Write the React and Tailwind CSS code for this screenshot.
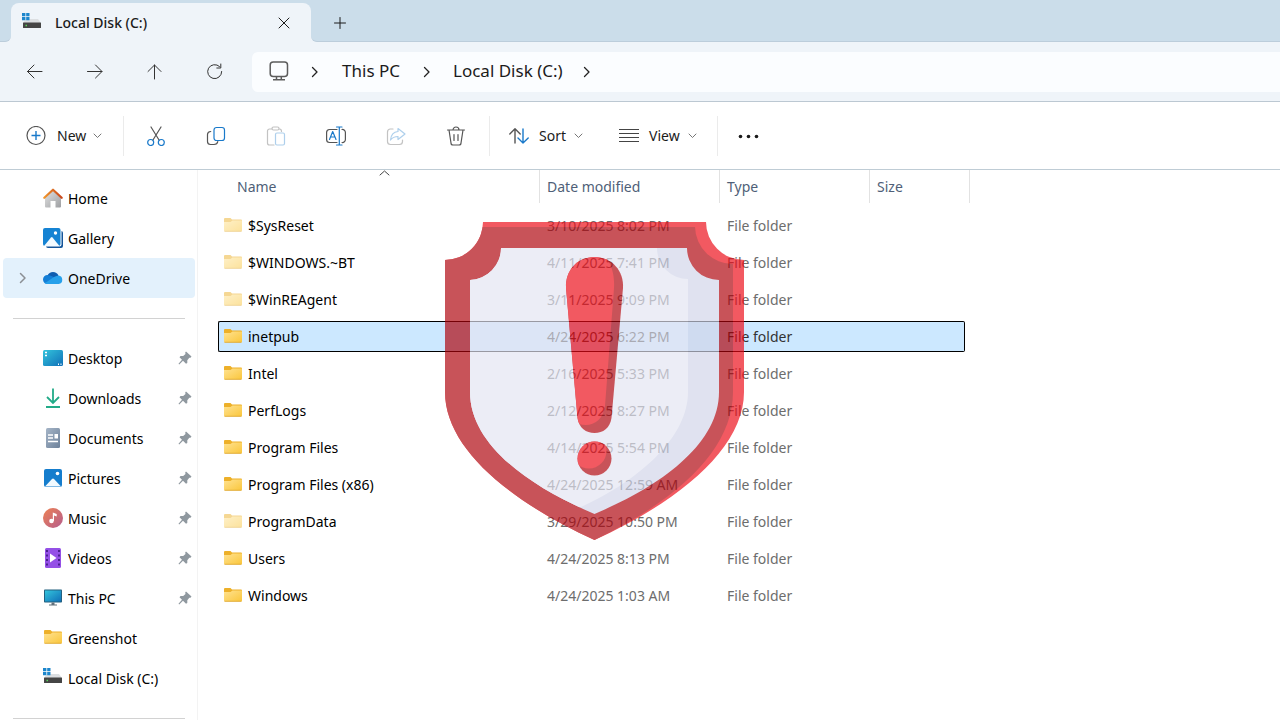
import React from 'react';

const places = [
    { name: 'Home', icon: HomeIcon },
    { name: 'Gallery', icon: GalleryIcon },
    { name: 'OneDrive', icon: CloudIcon, active: true },
];

const pinned = [
    { name: 'Desktop', icon: DesktopIcon, pin: true },
    { name: 'Downloads', icon: DownloadsIcon, pin: true },
    { name: 'Documents', icon: DocumentsIcon, pin: true },
    { name: 'Pictures', icon: PicturesIcon, pin: true },
    { name: 'Music', icon: MusicIcon, pin: true },
    { name: 'Videos', icon: VideosIcon, pin: true },
    { name: 'This PC', icon: MonitorIcon, pin: true },
    { name: 'Greenshot', icon: FolderIcon },
    { name: 'Local Disk (C:)', icon: DiskIcon },
];

const files = [
    { name: '$SysReset', date: '3/10/2025 8:02 PM', hidden: true },
    { name: '$WINDOWS.~BT', date: '4/11/2025 7:41 PM', hidden: true },
    { name: '$WinREAgent', date: '3/11/2025 9:09 PM', hidden: true },
    { name: 'inetpub', date: '4/24/2025 6:22 PM', selected: true },
    { name: 'Intel', date: '2/16/2025 5:33 PM' },
    { name: 'PerfLogs', date: '2/12/2025 8:27 PM' },
    { name: 'Program Files', date: '4/14/2025 5:54 PM' },
    { name: 'Program Files (x86)', date: '4/24/2025 12:59 AM' },
    { name: 'ProgramData', date: '3/29/2025 10:50 PM', hidden: true },
    { name: 'Users', date: '4/24/2025 8:13 PM' },
    { name: 'Windows', date: '4/24/2025 1:03 AM' },
];

export default function App() {
    return (
        <div className="min-h-screen flex flex-col bg-white text-[#1b1b1b] text-sm font-['Noto_Sans','Open_Sans',sans-serif]">
            <TabStrip />
            <AddressRow />
            <Toolbar />
            <div className="flex flex-1">
                <Sidebar />
                <main className="relative flex-1 pl-5">
                    <FileTable />
                    <Shield />
                </main>
            </div>
        </div>
    );
}

function TabStrip() {
    return (
        <header className="flex h-[42px] bg-[#eff4f9]">
            <div className="w-[11px] bg-[#cbddea] rounded-br-md border-b border-[#bccddb]" />
            <div className="w-[300px] bg-[#cbddea] pt-[3px]">
                <div className="flex items-center h-full bg-[#eff4f9] rounded-t-lg pl-[11px] pr-[15px]">
                    <DiskIcon />
                    <span className="ml-[13px] flex-1 font-medium">Local Disk (C:)</span>
                    <button aria-label="Close tab" className="w-6 h-6 grid place-items-center">
                        <Line d="M1 1 11 11M11 1 1 11" box="0 0 12 12" className="w-3 h-3" />
                    </button>
                </div>
            </div>
            <div className="flex-1 flex items-center bg-[#cbddea] rounded-bl-md border-b border-[#bccddb] pl-[17px]">
                <button aria-label="New tab" className="w-6 h-6 mt-1 grid place-items-center">
                    <Line d="M6 0.5V11.5M0.5 6H11.5" box="0 0 12 12" className="w-3 h-3" />
                </button>
            </div>
        </header>
    );
}

function AddressRow() {
    return (
        <div className="flex items-center h-[60px] bg-[#eff4f9] border-b border-[#bcc8d2]">
            <div className="flex gap-5 pl-[15px]">
                <NavButton label="Back" d="M17 9.5H2.5M9 3 2.5 9.5 9 16" />
                <NavButton label="Forward" d="M2.5 9.5H17M10.500 3 17 9.500 10.500 16" />
                <NavButton label="Up" d="M9.500 17V3M3 9.500 9.500 3 16 9.500" />
                <NavButton label="Refresh" d="M14.500 4.500A7 7 0 1 0 16.700 9.500M15.800 2V6H11.800" />
            </div>
            <nav className="flex-1 flex items-center h-10 ml-[17px] bg-[#fbfdff] rounded-l-md text-[17px]">
                <svg viewBox="0 0 20 20" className="w-5 h-5 ml-[17px] mb-0.5" fill="none" stroke="#5c5c5c" strokeWidth="1.500">
                    <rect x="1.200" y="1" width="17.300" height="14.500" rx="3" />
                    <path d="M7.500 15.500V18.500M12.300 15.500V18.500M4 18.700H16" />
                </svg>
                <Crumb />
                <button className="w-[60px] whitespace-nowrap">This PC</button>
                <Crumb />
                <button className="w-[108px] whitespace-nowrap">Local Disk (C:)</button>
                <Crumb />
            </nav>
        </div>
    );
}

function NavButton({ label, d }) {
    return (
        <button aria-label={label} className="w-10 h-10 grid place-items-center">
            <Line d={d} box="0 0 20 20" width={1} className="w-5 h-5 text-[#333]" />
        </button>
    );
}

function Crumb() {
    return (
        <span className="w-[52px] grid place-items-center">
            <Line d="M1.500 1.500 6 6 1.500 10.500" box="0 0 8 12" width={1.300} className="w-2 h-3 text-[#222]" />
        </span>
    );
}

function Line({ d, box, className, width = 1 }) {
    return (
        <svg viewBox={box} className={className} fill="none" stroke="currentColor" strokeWidth={width} strokeLinecap="round" strokeLinejoin="round">
            <path d={d} />
        </svg>
    );
}

function Chevron() {
    return <Line d="M1 1 4.500 4.500 8 1" box="0 0 9 6" width={0.9} className="w-[9px] h-[6px] text-[#666]" />;
}

function Toolbar() {
    return (
        <div className="flex items-center h-[68px] border-b border-[#bfccd5]">
            <button className="flex items-center w-[123px] pl-[26px]">
                <svg viewBox="0 0 20 20" className="w-5 h-5" fill="none" strokeWidth="1.200">
                    <circle cx="10" cy="9.500" r="9" stroke="#555" />
                    <path d="M10 5V14M5.500 9.500H14.500" stroke="#1979ca" strokeWidth="1.400" />
                </svg>
                <span className="w-[37px] pl-[11px]">New</span>
                <span className="ml-auto mr-[21px]"><Chevron /></span>
            </button>
            <Divider />
            <div className="flex items-center pl-0.5">
                <Tool label="Cut">
                    <path d="M5 1 13.200 14.200M15 1 6.800 14.200" stroke="#555" />
                    <circle cx="4.700" cy="16.500" r="3" stroke="#1979ca" />
                    <circle cx="15.300" cy="16.500" r="3" stroke="#1979ca" />
                </Tool>
                <Tool label="Copy">
                    <path d="M4.700 5.500C2.500 5.700 1.500 6.800 1.500 8.500V15.500A3 3 0 0 0 4.500 18.500H8C10.200 18.500 11.500 17.500 11.800 15.500" stroke="#555" />
                    <rect x="8" y="1.500" width="10.500" height="13" rx="2.500" stroke="#1979ca" />
                </Tool>
                <Tool label="Paste" faded>
                    <path d="M6 3H3.500A2 2 0 0 0 1.500 5V17A2 2 0 0 0 3.500 19H8M13.500 3C15 3 15.500 4 15.500 5.500" stroke="#555" />
                    <rect x="6" y="1" width="7" height="3" rx="1.500" stroke="#555" />
                    <rect x="9.500" y="7" width="9" height="12" rx="1.500" stroke="#1979ca" />
                </Tool>
                <Tool label="Rename">
                    <path d="M11 3.500H3.500A3 3 0 0 0 .6 6.500V13.500A3 3 0 0 0 3.500 16.500H11M16 3.500A3 3 0 0 1 19.400 6.500V13.500A3 3 0 0 1 16 16.500" stroke="#555" />
                    <path d="M10.500 1H16M10.500 19H16M13.300 1V19M3.500 13.500 6.700 5.500 10 13.500M4.700 11H8.800" stroke="#1979ca" />
                </Tool>
                <Tool label="Share" faded>
                    <path d="M7 3H4A3 3 0 0 0 1.500 6V15.500A3 3 0 0 0 4.500 18.500H13.500A3 3 0 0 0 16.500 15.500V14" stroke="#555" />
                    <path d="M12 2.500 19 8 12 13.500V10.500C8.500 10.500 6.500 11.500 4.500 14C5 9 7.500 5.800 12 5.500Z" stroke="#1979ca" />
                </Tool>
                <Tool label="Delete">
                    <path d="M1.500 4H18.500M3 4 5 17A2 2 0 0 0 7 19H13A2 2 0 0 0 15 17L17 4M7 4A3 3 0 0 1 13 4M8 8.500V14.500M12 8.500V14.500" stroke="#555" />
                </Tool>
            </div>
            <div className="w-[3px]" />
            <Divider />
            <button className="flex items-center pl-[19px]">
                <svg viewBox="0 0 20 20" className="w-5 h-5" fill="none" strokeWidth="1.400" strokeLinecap="round" strokeLinejoin="round">
                    <path d="M6 17V3M.800 8 6 2.800 11.200 8" stroke="#555" />
                    <path d="M14 3V17M9 12 14 17 19.200 12" stroke="#1979ca" />
                </svg>
                <span className="w-[45px] pl-2.5 text-left">Sort</span>
                <Chevron />
            </button>
            <button className="flex items-center pl-9">
                <svg viewBox="0 0 20 20" className="w-5 h-5" fill="none" stroke="#444" strokeWidth="1.200">
                    <path d="M0 3.500H20M0 7.500H20M0 11.500H20M0 15.500H20" />
                </svg>
                <span className="w-[49px] pl-2.5 text-left">View</span>
                <Chevron />
            </button>
            <div className="w-5" />
            <Divider />
            <button aria-label="See more" className="pl-5">
                <svg viewBox="0 0 22 20" className="w-[22px] h-5" fill="#1b1b1b">
                    <circle cx="2.500" cy="10.500" r="1.800" />
                    <circle cx="10.500" cy="10.500" r="1.800" />
                    <circle cx="18.500" cy="10.500" r="1.800" />
                </svg>
            </button>
        </div>
    );
}

function Divider() {
    return <div className="w-px h-10 bg-[#ebebeb]" />;
}

function Tool({ label, faded, children }) {
    return (
        <button aria-label={label} disabled={faded} className={`w-[60px] h-10 grid place-items-center ${faded ? 'opacity-35' : ''}`}>
            <svg viewBox="0 0 20 20" className="w-5 h-5" fill="none" strokeWidth="1.200" strokeLinecap="round" strokeLinejoin="round">
                {children}
            </svg>
        </button>
    );
}

function Sidebar() {
    return (
        <aside className="w-[198px] shrink-0 border-r border-[#f3f3f3] pt-2 pl-[3px] pr-0.5 text-black">
            {places.map((p) => <SideItem key={p.name} item={p} />)}
            <hr className="mt-5 mb-[19px] mx-2.5 border-[#d2d2d2]" />
            {pinned.map((p) => <SideItem key={p.name} item={p} />)}
            <hr className="mt-5 mx-2.5 border-[#d2d2d2]" />
        </aside>
    );
}

function SideItem({ item }) {
    const Icon = item.icon;
    return (
        <a href="#" className={`flex items-center h-10 rounded-sm ${item.active ? 'bg-[#e3f1fc]' : ''}`}>
            <span className="w-10 grid place-items-center">
                {item.active && <Line d="M1.500 1.500 6 6 1.500 10.500" box="0 0 8 12" width={1.500} className="w-2 h-3 text-[#8b8f94]" />}
            </span>
            <Icon />
            <span className="ml-[5px] pt-px flex-1">{item.name}</span>
            {item.pin && <PinIcon />}
        </a>
    );
}

function FileTable() {
    return (
        <table className="w-[752px] table-fixed text-left border-collapse">
            <thead className="text-[#4f5f78]">
                <tr className="h-[37px]">
                    <HeadCell className="w-[322px]" pad="pl-[19px]">
                        Name
                        <Line d="M1 5 5.500 1 10 5" box="0 0 11 6" width={1} className="absolute top-0 left-[161px] w-[11px] h-[6px] text-[#444]" />
                    </HeadCell>
                    <HeadCell className="w-[180px]" pad="pl-[7px]">Date modified</HeadCell>
                    <HeadCell className="w-[150px]" pad="pl-[7px]">Type</HeadCell>
                    <HeadCell className="w-[100px]" pad="pl-[7px]">Size</HeadCell>
                </tr>
            </thead>
            <tbody>
                {files.map((f) => {
                    const box = f.selected ? 'bg-[#cce8ff] border-black' : 'border-transparent';
                    const muted = f.selected ? 'text-[#333]' : 'text-[#6d6d6d]';
                    return (
                        <tr key={f.name} className="h-[37px]">
                            <td className="p-0">
                                <div className={`flex items-center h-[31px] border-y border-l rounded-l-xs pl-1 text-black ${box}`}>
                                    <span className={f.hidden ? 'opacity-50' : ''}><FolderIcon /></span>
                                    <span className="ml-[5px] pt-px">{f.name}</span>
                                </div>
                            </td>
                            <td className="p-0">
                                <div className={`flex items-center h-[31px] border-y pl-[7px] pt-px ${muted} ${box}`}>{f.date}</div>
                            </td>
                            <td className="p-0">
                                <div className={`flex items-center h-[31px] border-y pl-[7px] pt-px ${muted} ${box}`}>File folder</div>
                            </td>
                            <td className="p-0">
                                <div className={`h-[31px] mr-[5px] border-y border-r rounded-r-xs ${box}`} />
                            </td>
                        </tr>
                    );
                })}
            </tbody>
        </table>
    );
}

function HeadCell({ className, pad, children }) {
    return (
        <th className={`p-0 align-top font-normal ${className}`}>
            <div className={`relative flex items-center h-[33px] border-r border-[#e2e2e2] ${pad}`}>{children}</div>
        </th>
    );
}

// Translucent warning badge lying over the file list
function Shield() {
    return (
        <svg viewBox="0 0 299 318" className="absolute left-[247px] top-[52px] w-[299px] h-[318px] opacity-[0.67] pointer-events-none">
            <defs>
                <clipPath id="inner">
                    <path d="M56 26H242A32 32 0 0 0 274 58V170C274 222 216 264 149.500 292C83 264 25 222 25 170V58A32 32 0 0 0 56 26Z" />
                </clipPath>
                <clipPath id="bar">
                    <path d="M149.500 35C132 35 120 49 121 66L132.500 196C134 206 141 211 149.500 211C158 211 165 206 166.500 196L178 66C179 49 167 35 149.500 35Z" />
                </clipPath>
                <clipPath id="dot"><circle cx="149.500" cy="236.500" r="17" /></clipPath>
            </defs>
            <path fill="#ed0814" d="M38 0H261A38 38 0 0 0 299 38V170C299 225 237 278 149.500 318C62 278 0 225 0 170V38A38 38 0 0 0 38 0Z" />
            <path fill="#ae0009" d="M37.600 5H250A38 38 0 0 0 288 42V170C288 225 237 276 149.500 318C62 278 0 225 0 170V38A38 38 0 0 0 37.600 5Z" />
            <g clipPath="url(#inner)">
                <path fill="#d1d5e9" d="M0 0H299V318H0Z" />
                <path fill="#e4e5f2" d="M0 26H212A31 31 0 0 0 243 57V170C243 215 195 258 136 285L0 318Z" />
            </g>
            <g clipPath="url(#bar)">
                <path fill="#ae0009" d="M110 30H190V220H110Z" />
                <path fill="#ed0814" d="M110 30H156C165 38 170 50 169 66L160 184C158 199 146 206 134 202L110 220Z" />
            </g>
            <g clipPath="url(#dot)">
                <path fill="#ae0009" d="M130 218H170V256H130Z" />
                <circle fill="#ed0814" cx="144" cy="229" r="17.500" />
            </g>
        </svg>
    );
}

function Glyph({ children }) {
    return <svg viewBox="0 0 20 20" className="block w-5 h-5 shrink-0">{children}</svg>;
}

function HomeIcon() {
    return (
        <Glyph>
            <defs>
                <linearGradient id="wall" x1="0" y1="0" x2="1" y2="1"><stop stopColor="#e3e3e3" /><stop offset="1" stopColor="#9d9fa2" /></linearGradient>
                <linearGradient id="roof"><stop stopColor="#f0952b" /><stop offset="1" stopColor="#c9461b" /></linearGradient>
            </defs>
            <path fill="url(#wall)" d="M2 9 10 2 18 9V18.500A1 1 0 0 1 17 19.500H12.500V13H7.500V19.500H3A1 1 0 0 1 2 18.500Z" />
            <path fill="none" stroke="url(#roof)" strokeWidth="2.200" strokeLinecap="round" strokeLinejoin="round" d="M1.300 9.800 10 1.700 18.700 9.800" />
        </Glyph>
    );
}

function GalleryIcon() {
    return (
        <Glyph>
            <rect x="3" y="3" width="17" height="17" rx="2" fill="#14559a" />
            <rect x="0" y="0" width="18.500" height="18.500" rx="2" fill="#fff" />
            <rect x="0" y="0" width="17.500" height="18" rx="2" fill="#1583d3" />
            <path d="M1 18 8 9.500A1 1 0 0 1 9.500 9.500L16.500 18Z" fill="#f2faff" />
            <circle cx="12.500" cy="5" r="1.700" fill="#fff" />
        </Glyph>
    );
}

function CloudIcon() {
    return (
        <Glyph>
            <path d="M4.500 7.500A6 6 0 0 1 15.500 7.500L10 12 3 13Z" fill="#0f5db0" />
            <path d="M4.500 16A4.500 4.500 0 0 1 4.500 7C8 7 11 9.500 15 11.500L15 16Z" fill="#137ed6" />
            <path d="M1.500 15C6 13.500 10 8 15.500 7.500A4.300 4.300 0 0 1 15.700 16H4.500C3.500 16 2.300 15.600 1.500 15Z" fill="#27a0ea" />
        </Glyph>
    );
}

function DesktopIcon() {
    return (
        <Glyph>
            <defs><linearGradient id="desk" x1="0" y1="0" x2="1" y2="1"><stop stopColor="#33c4dc" /><stop offset="1" stopColor="#1070b8" /></linearGradient></defs>
            <rect x="0" y="2" width="20" height="16" rx="1.500" fill="url(#desk)" />
            <path d="M2 4.500H4M2 7.500H4M15 16.300H16M17.500 16.300H18.500" stroke="#fff" strokeWidth="1.600" />
        </Glyph>
    );
}

function DownloadsIcon() {
    return (
        <Glyph>
            <path d="M10 0.500V14.500M4 9 10 15 16 9M3 19H17" fill="none" stroke="#23ab88" strokeWidth="1.800" />
        </Glyph>
    );
}

function DocumentsIcon() {
    return (
        <Glyph>
            <defs><linearGradient id="doc" x1="0" y1="0" x2="1" y2="1"><stop stopColor="#a5b5c7" /><stop offset="1" stopColor="#6d819a" /></linearGradient></defs>
            <rect x="3" y="0" width="14" height="20" rx="1.500" fill="url(#doc)" />
            <path d="M5 7H10M5 10H10M5 13.500H15" stroke="#fff" strokeWidth="1.400" />
            <rect x="11.500" y="6" width="3.500" height="4.500" fill="#fff" />
        </Glyph>
    );
}

function PicturesIcon() {
    return (
        <Glyph>
            <rect x="1" y="1" width="18" height="18" rx="2" fill="#157dcd" />
            <path d="M2 18.500 9 11A1.400 1.400 0 0 1 11 11L18 18.500Z" fill="#f2faff" />
            <circle cx="14.500" cy="5.500" r="1.800" fill="#fff" />
        </Glyph>
    );
}

function MusicIcon() {
    return (
        <Glyph>
            <defs><linearGradient id="music" x1="0" y1="0" x2="1" y2="1"><stop stopColor="#ed8153" /><stop offset="1" stopColor="#b55d8e" /></linearGradient></defs>
            <circle cx="10" cy="10" r="10" fill="url(#music)" />
            <circle cx="8.500" cy="13" r="2.300" fill="#fff" />
            <path d="M9.800 13V4.500L13.700 6V8.500L11 7.500V13Z" fill="#fff" />
        </Glyph>
    );
}

function VideosIcon() {
    return (
        <Glyph>
            <rect x="2" y="0" width="16" height="20" rx="1.500" fill="#9450e6" />
            <path d="M4 2V19M16 2V19" stroke="#3f1a80" strokeWidth="1.700" strokeDasharray="2 2.500" />
            <path d="M7 5.500 13.500 10 7 14.500Z" fill="#fff" />
        </Glyph>
    );
}

function MonitorIcon() {
    return (
        <Glyph>
            <rect x="1" y="1.500" width="18" height="13" rx="0.800" fill="#23607f" />
            <rect x="2" y="2.500" width="16" height="11" fill="url(#desk)" />
            <path d="M8.500 14.500H11.500V16.500H14V17.500H6V16.500H8.500Z" fill="#61707b" />
        </Glyph>
    );
}

function FolderIcon() {
    return (
        <Glyph>
            <defs><linearGradient id="folder" x1="0" y1="0" x2="1" y2="1"><stop stopColor="#ffe291" /><stop offset="1" stopColor="#fac63b" /></linearGradient></defs>
            <path d="M1 3A1 1 0 0 1 2 2H7.500L9 3.500H18A1 1 0 0 1 19 4.500V9H1Z" fill="#edb029" />
            <path d="M1 6H7.500L9.500 4.500H19V14.500A1 1 0 0 1 18 15.500H2A1 1 0 0 1 1 14.500Z" fill="url(#folder)" />
            <path d="M1.500 15.300H18.500" stroke="#dda42e" strokeWidth="0.800" />
        </Glyph>
    );
}

function DiskIcon() {
    return (
        <Glyph>
            <path d="M4 6H16L19 10H1Z" fill="#dcdfe2" />
            <rect x="1" y="9.500" width="18" height="5.500" rx="0.500" fill="#454545" />
            <path d="M3.500 12.500H5" stroke="#5ad65a" strokeWidth="1.300" />
            <path d="M0 0H3.400V3.300H0ZM4.200 0H7.500V3.300H4.200ZM0 4H3.400V7.300H0ZM4.200 4H7.500V7.300H4.200Z" fill="#1c86cc" />
        </Glyph>
    );
}

function PinIcon() {
    return (
        <svg viewBox="0 0 14 14" className="w-[14px] h-[14px] mr-[3px]" fill="#8f989f">
            <path d="M8 0.500 13.500 5.500 12.500 6.800 11.300 6.700 9.300 9.200 9.300 12 8 12.700 5 9.800 1.200 13.500 0.500 12.800 4 8.800 1.500 6.200 2.500 5 5.200 5 7.500 3 7.200 1.500Z" />
        </svg>
    );
}
